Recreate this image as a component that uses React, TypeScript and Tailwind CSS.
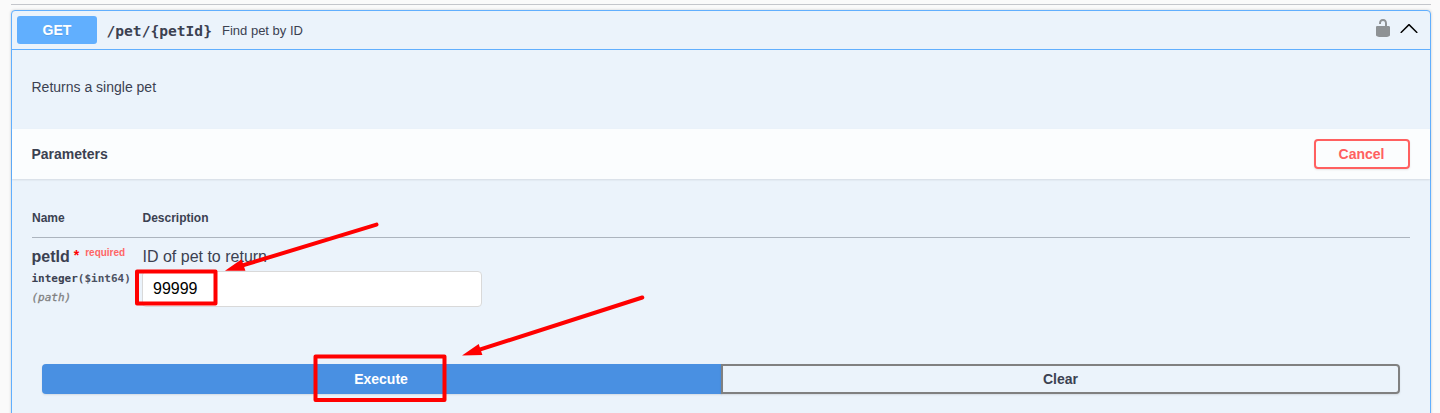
import React from "react";

function UnlockIcon() {
  return (
    <svg width="20" height="20" viewBox="0 0 20 20" className="fill-[#8e9295]">
      <path d="M15.8 8H14V5.6C14 2.703 12.665 1 10 1 7.334 1 6 2.703 6 5.6V6h2v-.801C8 3.754 8.797 3 10 3c1.203 0 2 .754 2 2.199V8H4c-.553 0-1 .646-1 1.199V17c0 .549.428 1.139.951 1.307l1.197.387C5.672 18.861 6.55 19 7.1 19h5.8c.549 0 1.428-.139 1.951-.307l1.196-.387c.524-.167.953-.757.953-1.306V9.199C17 8.646 16.352 8 15.8 8z" />
    </svg>
  );
}

function ArrowUpIcon() {
  return (
    <svg width="20" height="20" viewBox="0 0 20 20" className="fill-black">
      <path d="M17.418 14.908c.272.268.709.268.979 0s.271-.701 0-.969l-7.908-7.83c-.27-.268-.707-.268-.979 0l-7.908 7.83c-.27.268-.27.701 0 .969.271.268.709.268.979 0L10 7.767l7.418 7.141z" />
    </svg>
  );
}

function Annotations() {
  return (
    <svg
      width="1440"
      height="413"
      viewBox="0 0 1440 413"
      className="pointer-events-none absolute top-0 left-0"
      fill="none"
      stroke="#ff0000"
      strokeWidth="4"
      strokeLinecap="round"
      strokeLinejoin="round"
    >
      <rect x="137" y="271.5" width="78.5" height="32" />
      <rect x="315.5" y="356.5" width="129" height="43.5" />
      <path d="M241 265.9 376.5 224.6M478 350.2 642.3 297.5" />
      <path d="M225 270.7 241.6 259.3 245.4 270.7ZM462 355.5 478.7 344 482.4 355Z" fill="#ff0000" stroke="none" />
    </svg>
  );
}

export default function App() {
  return (
    <div className="relative h-[413px] overflow-hidden bg-[#fafafa] px-[11px] pr-[9px] pt-1 font-['Liberation_Sans',Arial,sans-serif] text-[#3b4151]">
      <div className="mb-[5px] h-px bg-[#c4c6cb]" />
      <section className="h-[440px] rounded border border-[#61affe] bg-[#ebf3fb] shadow-[0_0_3px_rgba(0,0,0,0.19)]">
        <header className="flex h-[39px] items-center border-b border-[#61affe] pr-[11px] pl-[5px]">
          <span className="h-7 w-20 rounded-[3px] bg-[#61affe] text-center text-sm leading-7 font-bold text-white [text-shadow:0_1px_0_rgba(0,0,0,0.1)]">
            GET
          </span>
          <span className="mt-0.5 ml-[9.5px] w-[105px] font-['DejaVu_Sans_Mono',monospace] text-[14.6px] leading-5 font-bold whitespace-nowrap">
            /pet/&#123;petId&#125;
          </span>
          <span className="mt-0.5 ml-[10.5px] grow text-[13px]">Find pet by ID</span>
          <button type="button" className="mr-1.5 mb-1"><UnlockIcon /></button>
          <button type="button" className="mb-1"><ArrowUpIcon /></button>
        </header>

        <p className="h-[79px] pr-5 pl-[19.5px] pt-[27px] text-sm leading-5">Returns a single pet</p>

        <div className="flex h-[50px] items-center justify-between bg-white/80 pr-5 pl-[19.5px] shadow-[0_1px_2px_rgba(0,0,0,0.1)]">
          <h4 className="text-sm font-bold">Parameters</h4>
          <button type="button" className="h-[30px] w-24 rounded border-2 border-[#ff6060] pr-px text-sm leading-[26px] font-bold text-[#ff6060] shadow-[0_1px_2px_rgba(0,0,0,0.1)]">
            Cancel
          </button>
        </div>

        <div className="px-5 pt-[31px]">
          <div className="flex h-[28px] border-b border-[#acb4be] text-xs leading-4 font-bold">
            <div className="w-[110.5px]">Name</div>
            <div>Description</div>
          </div>
          <div className="flex h-[126px] pt-[9px]">
            <div className="w-[110px] shrink-0">
              <div className="-ml-[0.5px] flex h-5 text-base leading-5 font-bold">
                petId
                <span className="ml-1 text-sm leading-4 text-[#f00]">*</span>
                <span className="ml-[6px] text-[10px] leading-[12px] text-[#ff6666]">required</span>
              </div>
              <div className="-ml-[0.5px] pt-1 font-['DejaVu_Sans_Mono',monospace] text-[11px] leading-4 font-bold whitespace-nowrap">
                integer<span className="opacity-90">($int64)</span>
              </div>
              <div className="-ml-[0.5px] pt-[3px] font-['DejaVu_Sans_Mono',monospace] text-[11px] leading-4 text-[#808080] italic [-webkit-text-stroke:0.3px_#808080]">(path)</div>
            </div>
            <div>
              <p className="h-6 pl-[0.5px] text-base leading-5">ID of pet to return</p>
              <input
                type="text"
                defaultValue="99999"
                className="block h-9 w-[340px] rounded border border-[#d9d9d9] bg-white px-2.5 text-base text-black outline-none"
              />
            </div>
          </div>
          <div className="flex px-2.5 text-sm font-bold">
            <button type="button" className="h-[30px] w-[680px] shrink-0 rounded-l bg-[#4990e2] pr-0.5 text-white shadow-[0_1px_2px_rgba(0,0,0,0.1)]">
              Execute
            </button>
            <button type="button" className="-ml-px h-[30px] grow rounded-r border-2 border-[#808080] shadow-[0_1px_2px_rgba(0,0,0,0.1)]">
              Clear
            </button>
          </div>
        </div>
      </section>
      <Annotations />
    </div>
  );
}
